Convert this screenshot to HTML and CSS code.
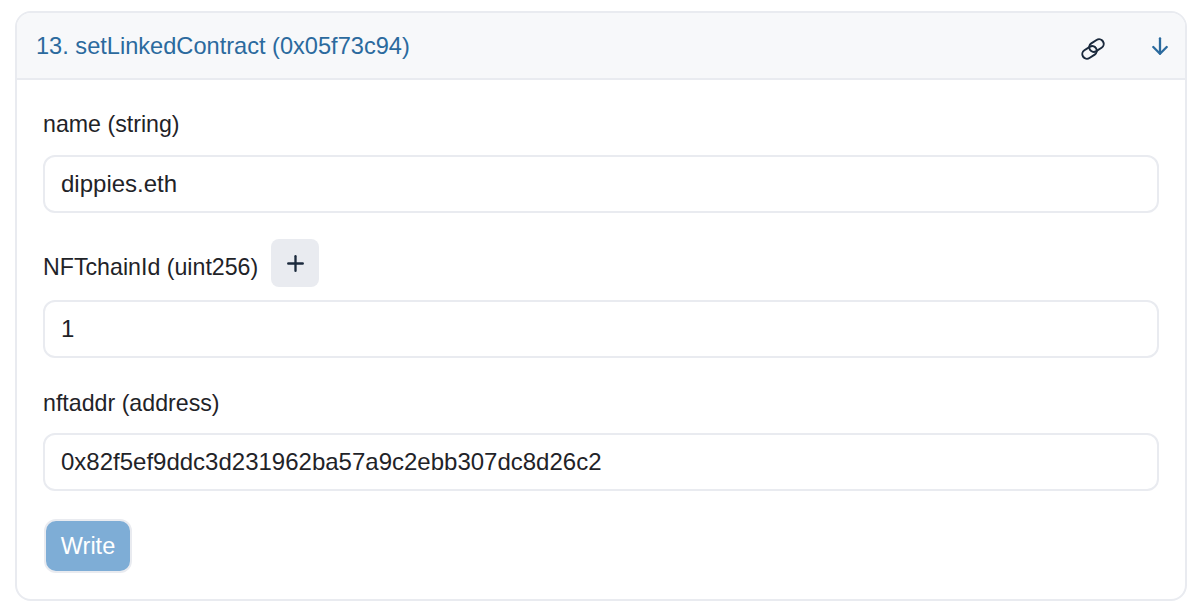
FILE: index.html
```html
<!DOCTYPE html>
<html lang="en">
<head>
<meta charset="utf-8">
<title>setLinkedContract</title>
<link rel="stylesheet" href="styles.css">
</head>
<body>
<section class="card">
  <header class="card-head">
    <span class="fn-title">13. setLinkedContract (0x05f73c94)</span>
    <span class="head-icons">
      <svg class="icon-link" viewBox="0 0 26 20" fill="none" stroke="#1b2a3d" stroke-width="2"><g transform="rotate(-33 13 10)"><rect x="0.5" y="6.4" width="15.5" height="9.2" rx="4.6"/><rect x="10" y="4.4" width="15.5" height="9.2" rx="4.6"/></g></svg>
      <svg class="icon-arrow" viewBox="0 0 16 18" fill="none" stroke="#2b6a9e" stroke-width="2.3" stroke-linecap="round" stroke-linejoin="round"><path d="M8 1.3v15.4"/><path d="M1.3 10l6.7 6.7 6.7-6.7"/></svg>
    </span>
  </header>
  <form class="card-body">
    <div class="field">
      <div class="label-row"><label class="label">name (string)</label></div>
      <input class="input" type="text" value="dippies.eth">
    </div>
    <div class="field field-chain">
      <div class="label-row"><label class="label label-low">NFTchainId (uint256)</label><button class="plus" type="button" aria-label="add"><svg viewBox="0 0 16 16" fill="none" stroke="#1b2a3d" stroke-width="2.2" stroke-linecap="round"><path d="M8 1.2v13.6"/><path d="M1.2 8h13.6"/></svg></button></div>
      <input class="input" type="text" value="1">
    </div>
    <div class="field field-addr">
      <div class="label-row"><label class="label">nftaddr (address)</label></div>
      <input class="input" type="text" value="0x82f5ef9ddc3d231962ba57a9c2ebb307dc8d26c2">
    </div>
    <button class="write" type="button">Write</button>
  </form>
</section>
</body>
</html>
```
FILE: styles.css
```css
* { box-sizing: border-box; }
html, body { margin: 0; padding: 0; background: #fff; }
body {
  padding: 11px 11px 0 15px;
  font-family: "Liberation Sans", Arial, sans-serif;
  color: #1f2328;
  overflow: hidden;
}
.card {
  border: 2px solid #e9ebf0;
  border-radius: 16px;
  height: 590px;
  overflow: hidden;
}
.card-head {
  height: 67px;
  background: #f7f8fa;
  border-bottom: 2px solid #e9ebf0;
  display: flex;
  align-items: center;
  justify-content: space-between;
  padding: 0 17px 0 19px;
}
.fn-title { font-size: 23.6px; color: #2b6a9e; margin-top: 2px; }
.head-icons { display: flex; align-items: center; gap: 46px; }
.icon-link { width: 26px; height: 20px; margin-top: 6px; overflow: visible; }
.icon-arrow { width: 16px; height: 18px; }
.card-body { padding: 0 26px; display: flex; flex-direction: column; align-items: stretch; }
.field { display: flex; flex-direction: column; }
.label-row { display: flex; align-items: center; gap: 13px; margin: 31px 0 18px; }
.label { font-size: 23.2px; line-height: 26px; color: #1f2328; }
.label-low { margin-top: 8px; }
.field-chain .label-row { margin: 26px 0 13px; }
.field-addr .label-row { margin: 32px 0 17px; }
.input {
  height: 58px;
  border: 2px solid #e9ebf0;
  border-radius: 12px;
  padding: 0 16px;
  font: 24px "Liberation Sans", Arial, sans-serif;
  color: #1f2328;
  background: #fff;
  outline: none;
}
.plus {
  width: 48px;
  height: 48px;
  border: 0;
  border-radius: 8px;
  background: #e9ebf0;
  display: flex;
  align-items: center;
  justify-content: center;
  padding: 0;
}
.plus svg { width: 17px; height: 17px; }
.write {
  align-self: flex-start;
  margin-top: 28px;
  margin-left: 1px;
  width: 88px;
  height: 54px;
  border: 2px solid #e9ebf0;
  border-radius: 12px;
  background: #7eadd6;
  color: #fff;
  font: 23.5px "Liberation Sans", Arial, sans-serif;
  padding: 0;
}
```
